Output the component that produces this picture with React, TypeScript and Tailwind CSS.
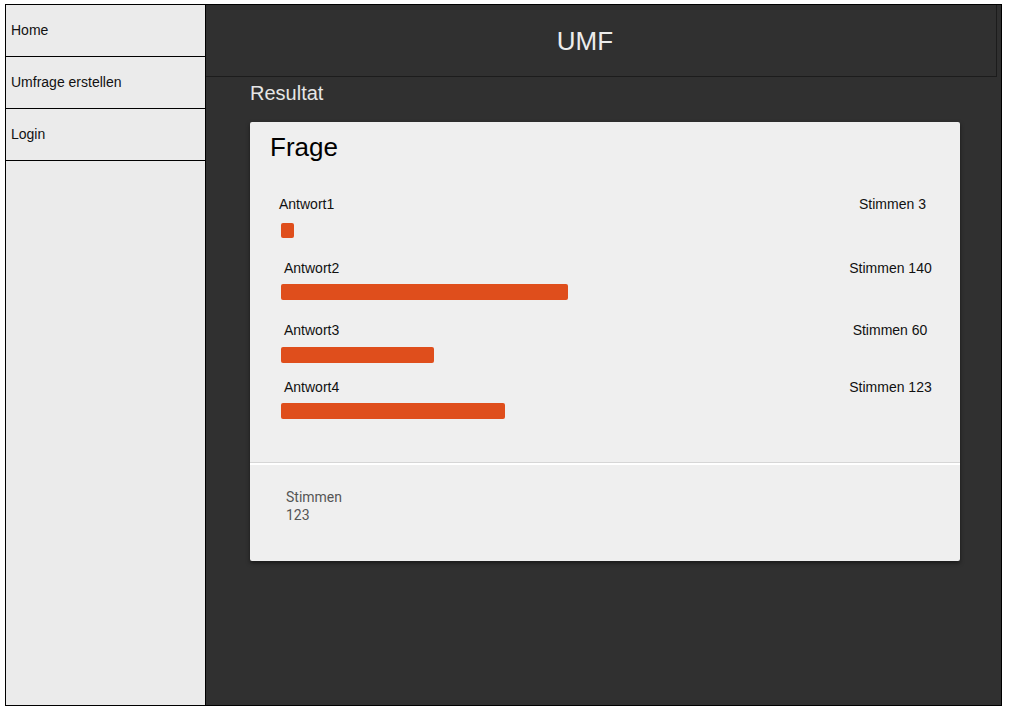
import React from "react";

const rows = [
  { label: "Antwort1", count: "Stimmen 3", w: 13, h: 15, labelMl: "ml-[-2px]", countPl: "pl-[5px]", labelMt: "mt-[34px]", barMt: "mt-[11px]" },
  { label: "Antwort2", count: "Stimmen 140", w: 287, h: 16, labelMl: "ml-[3px]", countPl: "pl-[1px]", labelMt: "mt-[22px]", barMt: "mt-[8px]" },
  { label: "Antwort3", count: "Stimmen 60", w: 153, h: 16, labelMl: "ml-[3px]", countPl: "pl-[0px]", labelMt: "mt-[22px]", barMt: "mt-[9px]" },
  { label: "Antwort4", count: "Stimmen 123", w: 224, h: 16, labelMl: "ml-[3px]", countPl: "pl-[1px]", labelMt: "mt-[16px]", barMt: "mt-[8px]" },
];

export default function App() {
  return (
    <div
      className="w-[1009px] h-[711px] bg-white pt-[4px] pl-[5px]"
      style={{ fontFamily: '"Liberation Sans", Arial, sans-serif' }}
    >
      <div className="w-[997px] h-[702px] border border-black flex">
        <nav className="w-[200px] shrink-0 h-full bg-[#ebebeb] border-r border-black flex flex-col">
          {["Home", "Umfrage erstellen", "Login"].map((t) => (
            <div
              key={t}
              className="h-[52px] border-b border-black flex items-center pl-[5px] text-[14px] text-[#111]"
            >
              {t}
            </div>
          ))}
        </nav>
        <main className="flex-1 h-full bg-[#303030] flex flex-col">
          <header className="w-[791px] h-[72px] border-b border-r border-[#1c1c1c] flex items-center justify-center pr-[32px]">
            <span className="text-[26px] text-[#ececec] leading-[30px]">UMF</span>
          </header>
          <div className="pl-[44px] mt-[5px] text-[20px] leading-[23px] text-[#e6e6e6]">Resultat</div>
          <section className="ml-[44px] mt-[17px] w-[710px] bg-[#efefef] rounded-[2px] shadow-[0_2px_4px_rgba(0,0,0,0.5)] flex flex-col">
            <h1 className="pl-[20px] pt-[10px] text-[26px] leading-[30px] text-black">Frage</h1>
            <div className="pl-[31px] pr-[20px] flex flex-col">
              {rows.map((r) => (
                <div key={r.label} className="flex flex-col">
                  <div className={`${r.labelMt} flex justify-between text-[14px] leading-[16px] text-[#111]`}>
                    <span className={r.labelMl}>{r.label}</span>
                    <span className={`w-[100px] text-center ${r.countPl}`}>{r.count}</span>
                  </div>
                  <div
                    className={`${r.barMt} bg-[#df4e1c] rounded-[2px]`}
                    style={{ width: r.w, height: r.h }}
                  />
                </div>
              ))}
            </div>
            <div className="mt-[43px] h-[1px] bg-[#d6d6d6]" />
            <div className="h-[2px] bg-white" />
            <div
              className="pl-[36px] mt-[23px] pb-[37px] text-[14px] leading-[18px] text-[#555]"
              style={{ fontFamily: 'Roboto, "Liberation Sans", sans-serif' }}
            >
              <div>Stimmen</div>
              <div>123</div>
            </div>
          </section>
        </main>
      </div>
    </div>
  );
}
